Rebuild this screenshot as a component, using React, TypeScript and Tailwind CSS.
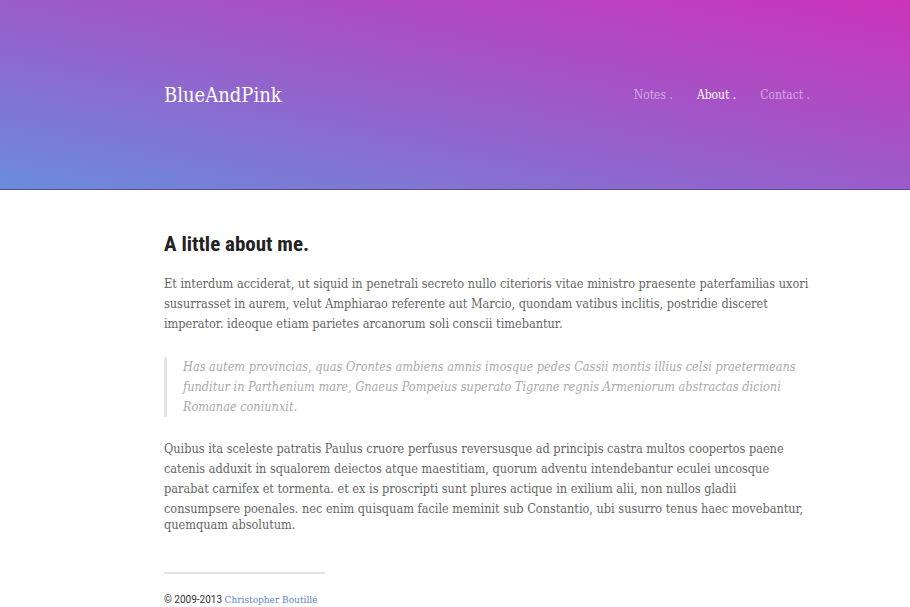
import React from "react";

const serif = "font-['DejaVu_Serif',serif] font-stretch-condensed";

export default function App() {
  return (
    <div className="min-h-[607px] w-full bg-white">
      <header className="h-[190px] border-b border-[#5b4a9a] bg-[linear-gradient(to_top_right,#6a8cdc_0%,#9a5cc9_50%,#cc33bb_100%)]">
        <div className="flex h-full items-center justify-between pl-[164px] pr-[100px]">
          <div className={`${serif} text-[20px] font-light text-white`}>BlueAndPink</div>
          <nav className={`${serif} flex gap-[24px] text-[12px] font-light`}>
            <span className="text-white/50">Notes .</span>
            <span className="text-white">About .</span>
            <span className="text-white/50">Contact .</span>
          </nav>
        </div>
      </header>
      <main className="pl-[164px] pt-[40px]">
        <div className="w-[646px]">
          <h1 className="font-['Roboto_Condensed','Liberation_Sans_Narrow',Roboto,sans-serif] font-stretch-condensed text-[21px] font-bold leading-[28px] text-[#222]">
            A little about me.
          </h1>
          <p className={`${serif} mt-[16px] whitespace-nowrap text-[12.6px] leading-[20px] text-[#666]`}>
            Et interdum acciderat, ut siquid in penetrali secreto nullo citerioris vitae ministro praesente paterfamilias uxori
            <br />
            susurrasset in aurem, velut Amphiarao referente aut Marcio, quondam vatibus inclitis, postridie disceret
            <br />
            imperator. ideoque etiam parietes arcanorum soli conscii timebantur.
          </p>
          <blockquote className={`${serif} mt-[23px] whitespace-nowrap border-l-[3px] border-[#e6e6e6] pl-[16px] text-[12.6px] italic leading-[20px] text-[#aaa]`}>
            Has autem provincias, quas Orontes ambiens amnis imosque pedes Cassii montis illius celsi praetermeans
            <br />
            funditur in Parthenium mare, Gnaeus Pompeius superato Tigrane regnis Armeniorum abstractas dicioni
            <br />
            Romanae coniunxit.
          </blockquote>
          <div className={`${serif} mt-[22px] whitespace-nowrap text-[12.6px] leading-[20px] text-[#666]`}>
            <div>Quibus ita sceleste patratis Paulus cruore perfusus reversusque ad principis castra multos coopertos paene</div>
            <div>catenis adduxit in squalorem deiectos atque maestitiam, quorum adventu intendebantur eculei uncosque</div>
            <div>parabat carnifex et tormenta. et ex is proscripti sunt plures actique in exilium alii, non nullos gladii</div>
            <div>consumpsere poenales. nec enim quisquam facile meminit sub Constantio, ubi susurro tenus haec movebantur,</div>
            <div className="-mt-[4px]">quemquam absolutum.</div>
          </div>
          <footer className="mt-[37px]">
            <div className="h-[2px] w-[161px] bg-[#e2e2e2]" />
            <div className="mt-[15px] text-[10px] leading-[20px]">
              <span className="font-['Roboto',sans-serif] text-[#333]">© 2009-2013 </span>
              <span className={`${serif} text-[#5b7fc7]`}>Christopher Boutillé</span>
            </div>
          </footer>
        </div>
      </main>
    </div>
  );
}
